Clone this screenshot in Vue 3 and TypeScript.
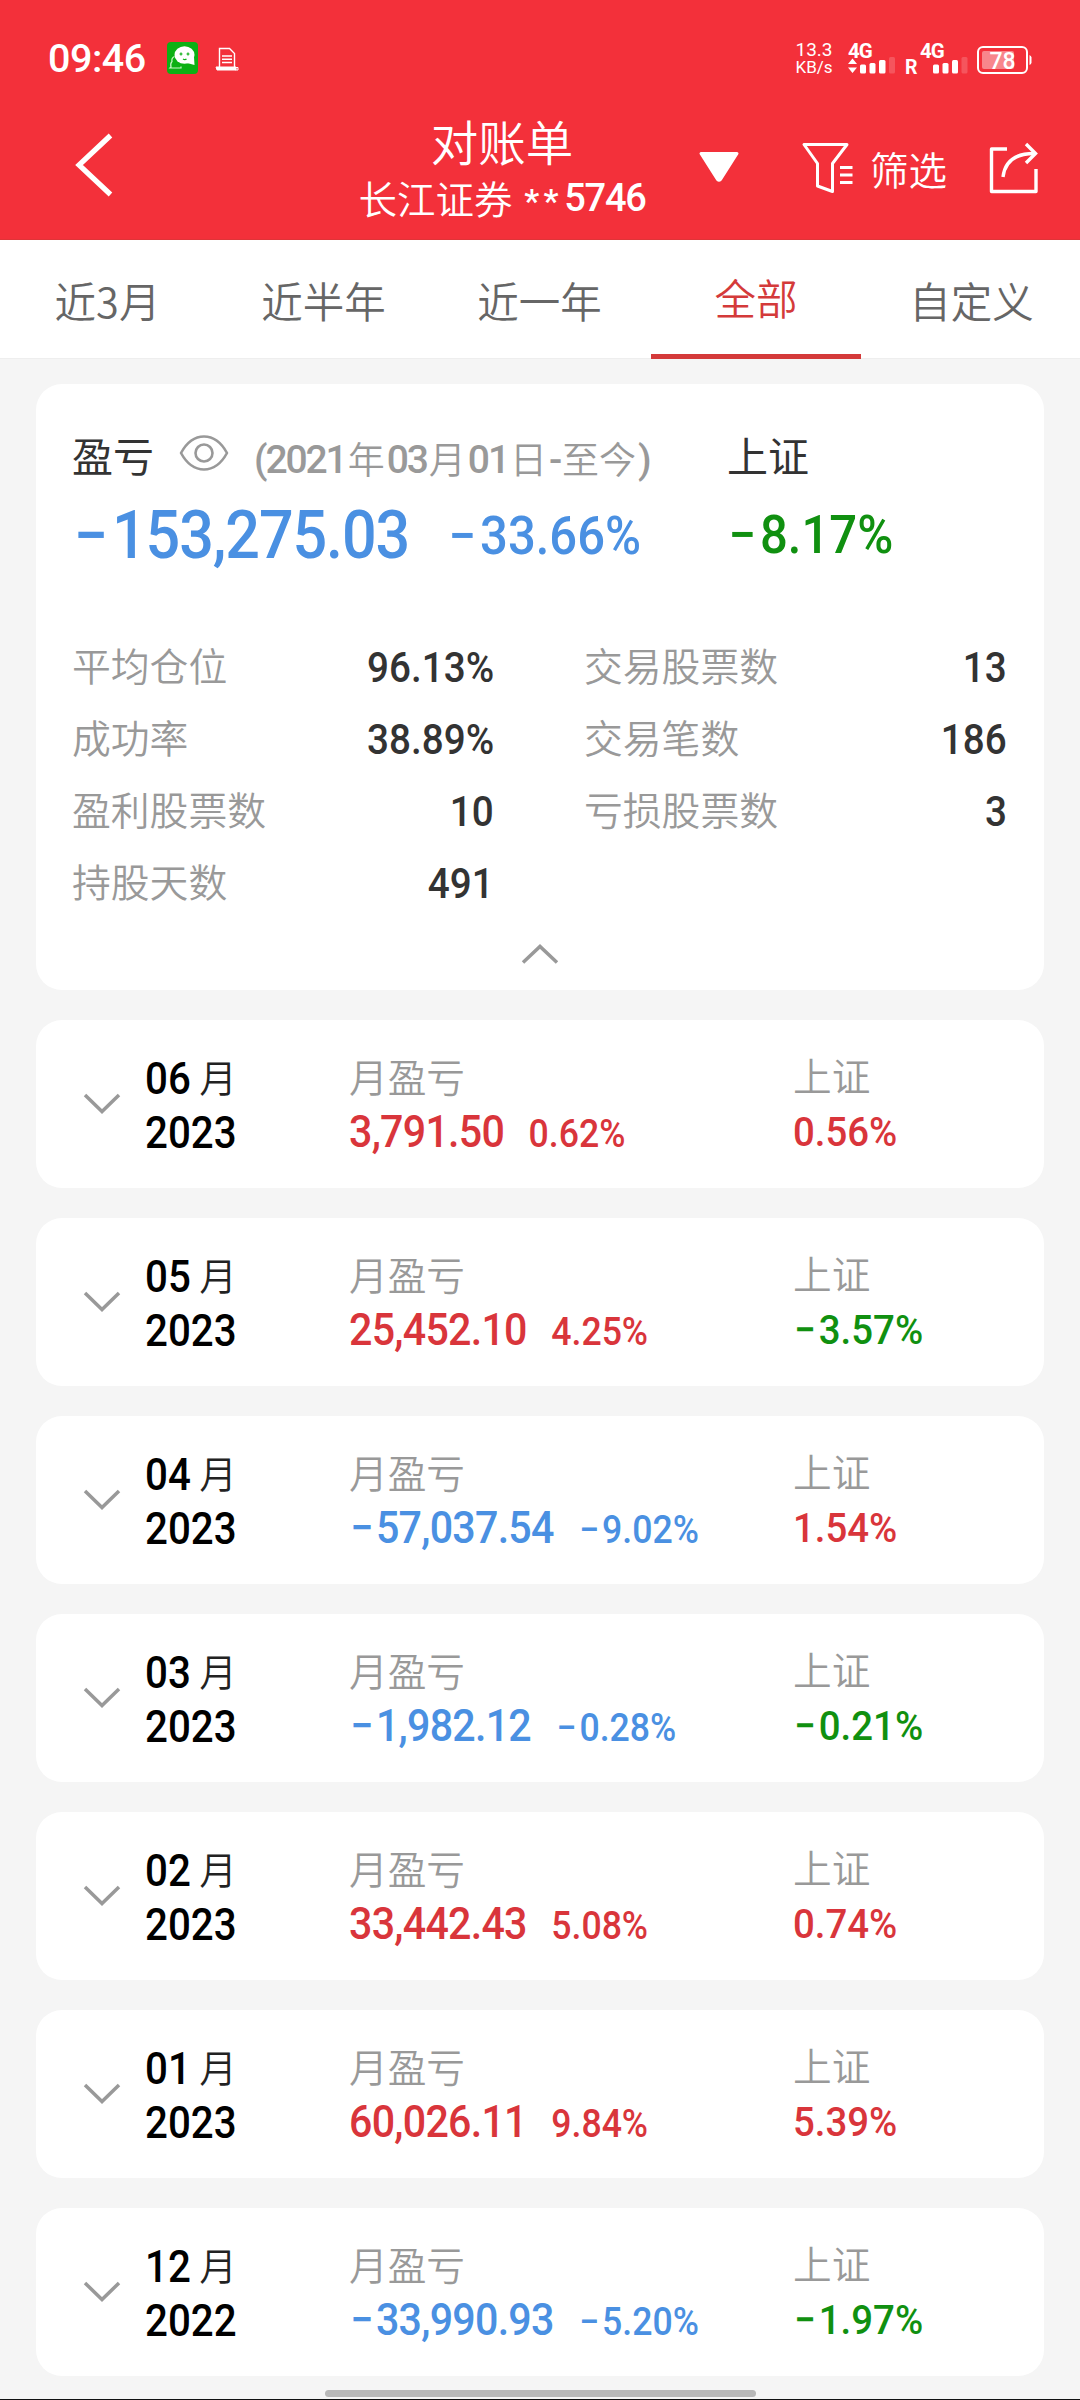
<script setup lang="ts">
interface Stat {
  label: string
  value: string
}

interface MonthRow {
  month: string
  year: string
  amount: string
  rate: string
  index: string
}

const tabs: string[] = ['近3月', '近半年', '近一年', '全部', '自定义']
const activeTab = '全部'

const stats: Stat[] = [
  { label: '平均仓位', value: '96.13%' },
  { label: '交易股票数', value: '13' },
  { label: '成功率', value: '38.89%' },
  { label: '交易笔数', value: '186' },
  { label: '盈利股票数', value: '10' },
  { label: '亏损股票数', value: '3' },
  { label: '持股天数', value: '491' },
]

const months: MonthRow[] = [
  { month: '06', year: '2023', amount: '3,791.50', rate: '0.62%', index: '0.56%' },
  { month: '05', year: '2023', amount: '25,452.10', rate: '4.25%', index: '−3.57%' },
  { month: '04', year: '2023', amount: '−57,037.54', rate: '−9.02%', index: '1.54%' },
  { month: '03', year: '2023', amount: '−1,982.12', rate: '−0.28%', index: '−0.21%' },
  { month: '02', year: '2023', amount: '33,442.43', rate: '5.08%', index: '0.74%' },
  { month: '01', year: '2023', amount: '60,026.11', rate: '9.84%', index: '5.39%' },
  { month: '12', year: '2022', amount: '−33,990.93', rate: '−5.20%', index: '−1.97%' },
]

const isLoss = (v: string): boolean => v.startsWith('−')
const magnitude = (v: string): string => v.replace('−', '')
</script>

<template>
  <div class="screen">
    <header class="top">
      <div class="status">
        <span class="clock">09:46</span>
        <svg class="wechat" width="32" height="32" viewBox="0 0 32 32">
          <rect width="31" height="32" rx="4" fill="#0cb014" />
          <path d="M7.500 14.500c-2 1-3 3-2.500 5-1.500 1.500-1.500 3.500-1 5.500l-1 1h11v-1.500" fill="none" stroke="#c9f5c6" stroke-width="1.200" />
          <ellipse cx="17.500" cy="13" rx="10" ry="8.800" fill="#fff" />
          <path d="M20 21l7.500 2-.5-8z" fill="#fff" />
          <path d="M14 10.500v3M12.500 12h3M21 10.500v3M19.500 12h3" stroke="#0cb014" stroke-width="1.200" />
          <path d="M16 17q2 1.300 3.500 0" fill="none" stroke="#0cb014" stroke-width="1.200" />
        </svg>
        <svg class="doc" width="24" height="24" viewBox="0 0 24 24" fill="none" stroke="#fff">
          <path d="M4.500 20V1.500h10l5 5V20" stroke-width="1.400" />
          <path d="M7 9h10M7 12.300h10M7 15.500h10" stroke-width="1.600" />
          <path d="M1 20h20v3H2z" fill="#fff" stroke-width="1" />
          <path d="M20.500 20.500h2.500v2.500h-2.500z" stroke-width="1" />
        </svg>
        <div class="status-right">
          <div class="speed"><span>13.3</span><span class="unit">KB/s</span></div>
          <svg class="signal" width="48" height="32" viewBox="0 0 48 32" fill="#fff">
            <text x="0" y="16" class="net">4G</text>
            <path d="M4.500 16.500l4.500 5.500h-9zM4.500 31l4.500-5.500h-9z" />
            <rect x="12" y="22.500" width="6" height="9" rx="1.500" />
            <rect x="21.500" y="21" width="6" height="10.500" rx="1.500" />
            <rect x="31" y="18" width="6.500" height="13.500" rx="1.500" />
            <rect x="41" y="15" width="6" height="16.500" rx="1.500" opacity=".18" />
          </svg>
          <svg class="signal second" width="64" height="32" viewBox="0 0 64 32" fill="#fff">
            <text x="0" y="31.500" class="roam">R</text>
            <text x="15" y="16" class="net">4G</text>
            <rect x="28" y="22.500" width="6" height="9" rx="1.500" />
            <rect x="37.500" y="21" width="6" height="10.500" rx="1.500" />
            <rect x="47" y="18" width="6" height="13.500" rx="1.500" />
            <rect x="56.500" y="15" width="6" height="16.500" rx="1.500" opacity=".18" />
          </svg>
          <svg class="battery" width="56" height="28" viewBox="0 0 56 28">
            <rect x="1" y="1" width="49" height="26" rx="5" fill="none" stroke="#fff" stroke-width="2" />
            <rect x="5" y="5" width="32" height="18" rx="2" fill="#fff" opacity=".42" />
            <path d="M52.500 9q2 1 2 2.500v5q0 1.500-2 2.500z" fill="#fff" />
            <text x="25.500" y="22.500" text-anchor="middle" class="level">78</text>
          </svg>
        </div>
      </div>

      <div class="nav">
        <svg class="back" width="42" height="66" viewBox="0 0 42 66">
          <path d="M37.500 3.500L6 33l31.500 29.500" fill="none" stroke="#fff" stroke-width="5.200" />
        </svg>
        <div class="title">
          <h1>对账单</h1>
          <div class="account">
            <span>长江证券</span><span class="stars">**</span><span class="acct-no">5746</span>
          </div>
        </div>
        <svg class="drop" width="42" height="32" viewBox="0 0 42 32">
          <path d="M3 2.500h36L22.500 28.500q-1.500 1.500-3 0z" fill="#fff" stroke="#fff" stroke-width="3" stroke-linejoin="round" />
        </svg>
        <svg class="funnel" width="52" height="52" viewBox="0 0 52 52" fill="none" stroke="#fff" stroke-width="3" stroke-linejoin="round">
          <path d="M2 2.500h43L30.500 21.500V49.500L15.500 44V21.500z" />
          <path d="M38 25.500h12.500M38 33h12.500M38 40.500h12.500" />
        </svg>
        <span class="filter">筛选</span>
        <svg class="share" width="50" height="52" viewBox="0 0 50 52" fill="none" stroke="#fff" stroke-width="3.400">
          <path d="M18 7H2.500v42.500h44.500V27" stroke-linejoin="round" />
          <path d="M14 35C16 19 27 11.500 45 11.500" />
          <path d="M37 2l9.500 9.500L37 21" />
        </svg>
      </div>
    </header>

    <nav class="tabs">
      <div v-for="t in tabs" :key="t" class="tab" :class="{ active: t === activeTab }">{{ t }}</div>
    </nav>

    <main>
      <section class="card summary">
        <div class="overview">
          <div class="pl">
            <div class="pl-head">
              <span class="strong-label">盈亏</span>
              <svg class="eye" width="50" height="38" viewBox="0 0 50 38" fill="none" stroke="#999" stroke-width="2.600">
                <path d="M2 19C8 8 15 2.500 25 2.500S42 8 48 19C42 30 35 35.500 25 35.500S8 30 2 19z" stroke-linejoin="round" />
                <circle cx="25" cy="19" r="8.500" />
              </svg>
              <span class="range"><i>(2021</i>年<i>03</i>月<i>01</i>日<i>-</i>至今<i>)</i></span>
            </div>
            <div class="pl-value squeeze">
              <span class="total"><span class="sign">−</span>153,275.03</span>
              <span class="total-rate"><span class="sign">−</span>33.66%</span>
            </div>
          </div>
          <div class="sh">
            <span class="strong-label">上证</span>
            <span class="sh-value squeeze"><span class="sign">−</span>8.17%</span>
          </div>
        </div>
        <div class="stats">
          <div v-for="s in stats" :key="s.label" class="stat">
            <span class="stat-label">{{ s.label }}</span>
            <span class="stat-value">{{ s.value }}</span>
          </div>
        </div>
        <svg class="collapse" width="40" height="24" viewBox="0 0 40 24">
          <path d="M3 20.500L20 4.500l17 16" fill="none" stroke="#999" stroke-width="3.500" />
        </svg>
      </section>

      <section v-for="m in months" :key="m.year + m.month" class="card month">
        <svg class="expand" width="40" height="24" viewBox="0 0 40 24">
          <path d="M3 3L20 19.500 37 3" fill="none" stroke="#999" stroke-width="3.500" />
        </svg>
        <div class="when">
          <div class="mon"><span class="digits">{{ m.month }}</span><span class="yue">月</span></div>
          <div class="digits">{{ m.year }}</div>
        </div>
        <div class="profit">
          <div class="label">月盈亏</div>
          <div class="figures squeeze" :class="isLoss(m.amount) ? 'blue' : 'red'">
            <span class="amount"><span v-if="isLoss(m.amount)" class="sign">−</span>{{ magnitude(m.amount) }}</span>
            <span class="rate"><span v-if="isLoss(m.rate)" class="sign">−</span>{{ magnitude(m.rate) }}</span>
          </div>
        </div>
        <div class="index">
          <div class="label">上证</div>
          <div class="index-value squeeze" :class="isLoss(m.index) ? 'green' : 'red'">
            <span v-if="isLoss(m.index)" class="sign">−</span>{{ magnitude(m.index) }}
          </div>
        </div>
      </section>
    </main>

    <div class="home-bar"></div>
  </div>
</template>

<style>
body {
  margin: 0;
  background: #f5f5f5;
}
</style>

<style scoped>
.screen {
  box-sizing: border-box;
  width: 1080px;
  height: 2400px;
  overflow: hidden;
  display: flex;
  flex-direction: column;
  background: #f5f5f5;
  border-bottom: 1px solid #111;
  font-family: 'Noto Sans CJK SC', sans-serif;
  font-weight: 350;
}
svg {
  display: block;
  flex: none;
  overflow: visible;
}
.top {
  height: 240px;
  box-sizing: border-box;
  background: #f3303a;
  border-bottom: 1px solid #df3438;
  color: #fff;
}
.status {
  display: flex;
  align-items: flex-start;
  height: 80px;
  padding: 0 47px 0 48px;
  font-family: Roboto, sans-serif;
}
.clock {
  width: 119px;
  margin-top: 36px;
  font-size: 39.500px;
  line-height: 46px;
  font-weight: 500;
  letter-spacing: -0.500px;
}
.wechat { margin-top: 42px; }
.doc { margin: 47px 0 0 16px; }
.status-right {
  display: flex;
  align-items: flex-start;
  margin-left: auto;
}
.speed {
  display: flex;
  flex-direction: column;
  align-items: center;
  width: 38px;
  margin: 39px 15px 0 1px;
  font-size: 19px;
  line-height: 22px;
  font-weight: 400;
}
.speed .unit { font-size: 17px; line-height: 13px; }
.signal { margin-top: 42px; }
.second { margin-left: 9px; }
.battery { margin: 46px 0 0 8px; }
.net { font: 700 20.500px Roboto, sans-serif; letter-spacing: -1px; }
.roam { font: 700 19.500px Roboto, sans-serif; }
.level { font: 500 23px Roboto, sans-serif; fill: #fff; }

.nav {
  display: flex;
  align-items: flex-start;
  height: 159px;
}
.back { margin: 52px 0 0 73px; }
.title {
  width: 300px;
  margin: 31px 0 0 237px;
  display: flex;
  flex-direction: column;
  align-items: center;
}
h1 {
  margin: 0;
  font-size: 47.500px;
  line-height: 60px;
  font-weight: inherit;
}
.account {
  display: flex;
  align-items: center;
  justify-content: space-between;
  width: 287px;
  font-size: 38.500px;
  line-height: 46px;
  white-space: nowrap;
}
.stars {
  margin: 9px -8px 0 2px;
  font: 500 34px/42px Roboto, sans-serif;
  letter-spacing: 4px;
}
.acct-no {
  font: 500 38px/44px Roboto, sans-serif;
  letter-spacing: -1.300px;
  margin-top: 3px;
}
.drop { margin: 71px 0 0 46px; }
.funnel { margin: 62px 0 0 62px; }
.filter {
  width: 85px;
  margin: 60px 0 0 16px;
  font-size: 38.500px;
  line-height: 56px;
}
.share { margin: 62px 0 0 34px; }

.tabs {
  display: flex;
  height: 118px;
  background: #fff;
  border-bottom: 1px solid #eee;
  flex: none;
}
.tab {
  box-sizing: border-box;
  width: 210px;
  height: 119px;
  margin: 0 3px;
  padding-right: 1px;
  text-align: center;
  font-size: 41.500px;
  line-height: 120px;
  color: #666;
}
.tab.active {
  padding-right: 0;
  color: #d43a3a;
  line-height: 114px;
  border-bottom: 5px solid #d43a3a;
}

main {
  flex: none;
  display: flex;
  flex-direction: column;
  padding: 25px 36px 0;
}
.card {
  box-sizing: border-box;
  background: #fff;
  border-radius: 26px;
  flex: none;
}
.squeeze {
  display: inline-block;
  transform: scaleX(0.925);
  transform-origin: left;
  white-space: nowrap;
  font-family: Roboto, sans-serif;
  font-weight: 500;
}
.sign { margin: 0 0.080em 0 0.030em; }

.summary {
  height: 606px;
  padding: 38px 36px 0 36px;
  display: flex;
  flex-direction: column;
}
.overview {
  display: flex;
  height: 204px;
}
.pl { width: 655px; }
.pl-head {
  display: flex;
  align-items: flex-start;
  height: 62px;
}
.strong-label {
  font-size: 41px;
  line-height: 65px;
  color: #333;
  font-weight: 400;
}
.eye { margin: 12px 23px 0 25px; }
.range {
  display: flex;
  white-space: nowrap;
  font-size: 37px;
  line-height: 72px;
  color: #999;
}
.range i {
  font: 500 39px/77px Roboto, sans-serif;
  letter-spacing: -2.100px;
  margin: 0 2px;
}
.pl-value {
  display: flex;
  align-items: center;
  line-height: 104px;
  color: #4a90e2;
}
.total { font-size: 66px; letter-spacing: -0.018em; }
.total-rate { font-size: 53px; margin-left: 41px; }
.sh {
  display: flex;
  flex-direction: column;
}
.sh-value {
  margin-top: -3px;
  font-size: 53px;
  line-height: 102px;
  color: #109010;
}
.stats {
  display: grid;
  grid-template-columns: 422px 421px;
  column-gap: 92px;
  grid-auto-rows: 72px;
}
.stat {
  display: flex;
  justify-content: space-between;
}
.stat-label {
  font-size: 38.800px;
  line-height: 77px;
  color: #999;
}
.stat:nth-child(even) .stat-label { margin-left: -2px; }
.stat-value {
  font: 500 42px/84px Roboto, sans-serif;
  color: #333;
  transform: scaleX(0.92);
  transform-origin: right;
}
.collapse { margin: 28px 0 0 448px; }

.month {
  display: flex;
  height: 168px;
  margin-top: 30px;
  padding: 32px 0 0 46px;
}
.expand { margin-top: 40px; }
.when {
  width: 204px;
  padding-left: 23px;
  display: flex;
  flex-direction: column;
  align-items: flex-start;
}
.mon {
  display: flex;
  height: 54px;
}
.digits {
  font: 500 45px/54px Roboto, sans-serif;
  color: #000;
  transform: scaleX(0.895);
  transform-origin: left;
}
.yue {
  margin-left: 3px;
  font-size: 37.500px;
  line-height: 48px;
  color: #222;
}
.profit { width: 444px; }
.label {
  font-size: 38.700px;
  line-height: 47px;
  height: 53px;
  color: #999;
}
.figures {
  display: flex;
  align-items: baseline;
  line-height: 54px;
}
.amount { font-size: 44.500px; letter-spacing: -0.018em; }
.rate { font-size: 38.500px; margin-left: 26.500px; }
.index .label { line-height: 44px; height: 53px; }
.index-value {
  font-size: 41.500px;
  line-height: 54px;
}
.red { color: #d9353b; }
.blue { color: #4a90e2; }
.green { color: #109010; }

.home-bar {
  width: 431px;
  height: 7px;
  margin: 14px auto 0;
  border-radius: 4px;
  background: #b8b8b8;
  flex: none;
}
</style>
